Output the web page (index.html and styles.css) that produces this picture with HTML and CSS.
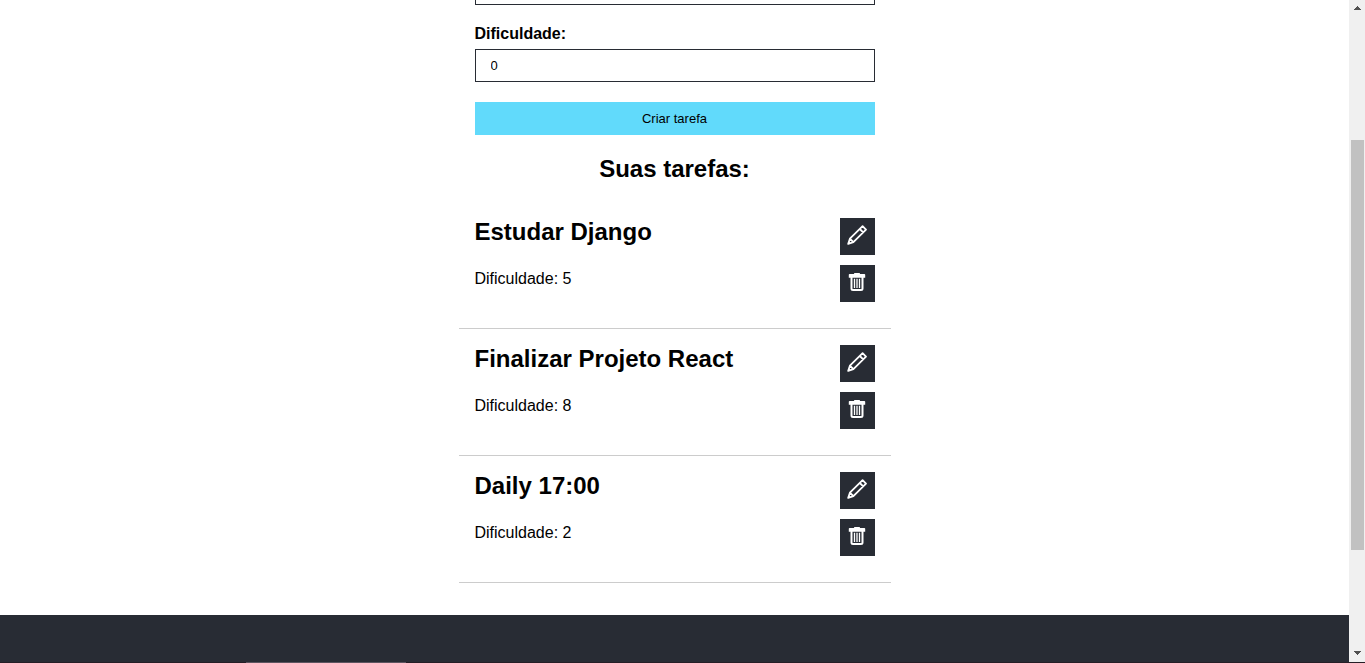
FILE: index.html
```html
<!DOCTYPE html>
<html lang="pt-BR">
<head>
<meta charset="utf-8">
<title>Tarefas</title>
<link rel="stylesheet" href="styles.css">
</head>
<body>
<svg class="symbols" aria-hidden="true">
  <symbol id="pencil" viewBox="0 0 20 20">
    <path d="M15.6 1.2 19 4.6 6.4 17.2 1.2 18.9 2.9 13.7ZM12.8 4 16.2 7.4M2.9 13.7 6.4 17.2" fill="none" stroke="currentColor" stroke-width="1.8" stroke-linejoin="round"/>
  </symbol>
  <symbol id="trash" viewBox="0 0 20 20">
    <path d="M2.6 2H7V1.7Q7 1 7.7 1H12.3Q13 1 13 1.7V2H17.4Q18.2 2 18.2 2.8V5.8H1.8V2.8Q1.8 2 2.6 2Z" fill="currentColor"/>
    <path d="M4.5 5V16.5Q4.5 18 6 18H14Q15.5 18 15.5 16.5V5" fill="none" stroke="currentColor" stroke-width="2"/>
    <path d="M7.5 6.8V16M10 6.8V16M12.5 6.8V16" fill="none" stroke="currentColor" stroke-width="1.3"/>
  </symbol>
</svg>
<div class="page">
  <div class="content">
    <main class="main">
      <form class="form">
        <input class="field field-title" type="text" aria-label="Título">
        <label class="label" for="difficulty">Dificuldade:</label>
        <input class="field" id="difficulty" type="text" inputmode="numeric" value="0">
        <button class="submit" type="button">Criar tarefa</button>
      </form>
      <h2 class="heading">Suas tarefas:</h2>
      <ul class="tasks">
        <li class="task">
          <div class="details"><h3 class="name">Estudar Django</h3><p class="difficulty">Dificuldade: 5</p></div>
          <div class="actions">
            <button class="action" type="button" aria-label="Editar"><svg class="icon"><use href="#pencil"/></svg></button>
            <button class="action" type="button" aria-label="Excluir"><svg class="icon"><use href="#trash"/></svg></button>
          </div>
        </li>
        <li class="task">
          <div class="details"><h3 class="name">Finalizar Projeto React</h3><p class="difficulty">Dificuldade: 8</p></div>
          <div class="actions">
            <button class="action" type="button" aria-label="Editar"><svg class="icon"><use href="#pencil"/></svg></button>
            <button class="action" type="button" aria-label="Excluir"><svg class="icon"><use href="#trash"/></svg></button>
          </div>
        </li>
        <li class="task">
          <div class="details"><h3 class="name">Daily 17:00</h3><p class="difficulty">Dificuldade: 2</p></div>
          <div class="actions">
            <button class="action" type="button" aria-label="Editar"><svg class="icon"><use href="#pencil"/></svg></button>
            <button class="action" type="button" aria-label="Excluir"><svg class="icon"><use href="#trash"/></svg></button>
          </div>
        </li>
      </ul>
    </main>
    <footer class="footer"></footer>
  </div>
  <div class="scrollbar" aria-hidden="true">
    <svg class="arrow" viewBox="0 0 7 4" shape-rendering="crispEdges"><path d="M3 0H4V1H5V2H6V3H7V4H0V3H1V2H2V1H3Z"/></svg>
    <div class="track"><div class="thumb"></div></div>
    <svg class="arrow" viewBox="0 0 7 4" shape-rendering="crispEdges"><path d="M0 0H7V1H6V2H5V3H4V4H3V3H2V2H1V1H0Z"/></svg>
  </div>
</div>
<div class="edge"><div class="edge-mark"></div></div>
</body>
</html>
```
FILE: styles.css
```css
* {
  box-sizing: border-box;
  margin: 0;
  padding: 0;
}

body {
  display: flex;
  flex-direction: column;
  min-height: 100vh;
  background: #fff;
  color: #000;
  font-family: "Liberation Sans", Arial, sans-serif;
  font-size: 16px;
  line-height: 18px;
}

.symbols {
  position: absolute;
  width: 0;
  height: 0;
}

.page {
  display: flex;
  flex: 1;
}

.content {
  display: flex;
  flex: 1;
  flex-direction: column;
  overflow: hidden;
}

.main {
  width: 100%;
  max-width: 432px;
  margin: 0 auto;
  padding-bottom: 32px;
}

.form {
  display: flex;
  flex-direction: column;
  padding: 0 16px;
}

.field {
  width: 100%;
  height: 33px;
  margin-bottom: 20px;
  padding: 0 15px;
  border: 1px solid #282c34;
  background: #fff;
  font-family: inherit;
  font-size: 13px;
}

.field-title {
  margin-top: -28px;
}

.label {
  margin-bottom: 6px;
  font-weight: bold;
}

.submit {
  height: 33px;
  border: 0;
  background: #61dafb;
  color: #000;
  font-family: inherit;
  font-size: 13px;
}

.heading {
  margin: 20px 0 19px;
  font-size: 24px;
  line-height: 28px;
  text-align: center;
}

.tasks {
  list-style: none;
}

.task {
  display: flex;
  justify-content: space-between;
  padding: 16px;
  border-bottom: 1px solid #ccc;
}

.name {
  margin-bottom: 24px;
  font-size: 24px;
  line-height: 28px;
}

.actions {
  display: flex;
  flex-direction: column;
  gap: 10px;
  padding-bottom: 10px;
}

.action {
  display: flex;
  align-items: flex-start;
  justify-content: center;
  width: 35px;
  height: 37px;
  padding-top: 7px;
  border: 0;
  background: #282c34;
  color: #fff;
}

.icon {
  width: 20px;
  height: 20px;
}

.footer {
  flex: 1;
  min-height: 47px;
  background: #282c34;
}

.scrollbar {
  display: flex;
  flex-direction: column;
  align-items: center;
  width: 16px;
  padding: 6px 0 7px;
  background: #f0f0f0;
}

.arrow {
  width: 7px;
  height: 4px;
  fill: #505050;
}

.track {
  display: flex;
  flex: 1;
  flex-direction: column;
  align-self: stretch;
  padding: 130px 1px 101px 2px;
}

.thumb {
  flex: 1;
  background: #c1c1c1;
}

.edge {
  height: 1px;
  padding-left: 18%;
  background: #251e26;
}

.edge-mark {
  width: 160px;
  height: 1px;
  background: #5d5560;
}
```
